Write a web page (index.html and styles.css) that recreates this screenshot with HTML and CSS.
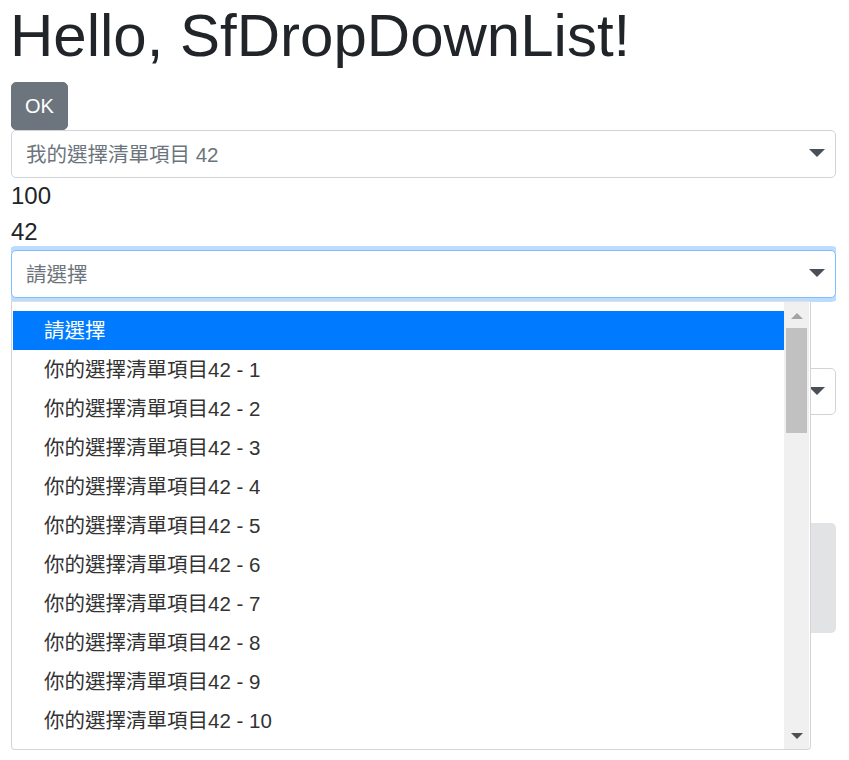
FILE: index.html
```html
<!DOCTYPE html>
<html lang="zh-Hant">
<head>
<meta charset="utf-8">
<title>SfDropDownList</title>
<link rel="stylesheet" href="styles.css">
</head>
<body>
  <h1 class="title">Hello, SfDropDownList!</h1>
  <button class="btn">OK</button>
  <div class="dd">
    <span class="dd-text">我的選擇清單項目 42</span>
    <span class="caret"></span>
  </div>
  <div class="val">100</div>
  <div class="val">42</div>
  <div class="dd-wrap">
    <div class="dd dd-focus">
      <span class="dd-text">請選擇</span>
      <span class="caret"></span>
    </div>
    <div class="popup">
      <ul class="list">
        <li class="item item-active">請選擇</li>
        <li class="item">你的選擇清單項目42 - 1</li>
        <li class="item">你的選擇清單項目42 - 2</li>
        <li class="item">你的選擇清單項目42 - 3</li>
        <li class="item">你的選擇清單項目42 - 4</li>
        <li class="item">你的選擇清單項目42 - 5</li>
        <li class="item">你的選擇清單項目42 - 6</li>
        <li class="item">你的選擇清單項目42 - 7</li>
        <li class="item">你的選擇清單項目42 - 8</li>
        <li class="item">你的選擇清單項目42 - 9</li>
        <li class="item">你的選擇清單項目42 - 10</li>
      </ul>
      <div class="scrollbar">
        <span class="sb-up"></span>
        <span class="sb-thumb"></span>
        <span class="sb-down"></span>
      </div>
    </div>
  </div>
  <div class="dd dd-third">
    <span class="dd-text"></span>
    <span class="caret"></span>
  </div>
  <div class="panel"></div>
</body>
</html>
```
FILE: styles.css
```css
* { box-sizing: border-box; }

html, body { background: #fff; }

body {
  margin: 0 13px 0 11px;
  min-height: 760px;
  font-family: "Liberation Sans", "Noto Sans CJK TC", sans-serif;
  font-size: 20px;
  color: #212529;
}

.title {
  margin: 0 0 10px -1px;
  font-size: 60px;
  font-weight: 400;
  line-height: 72px;
  color: #212529;
}

.btn {
  display: block;
  height: 48px;
  padding: 0 13px;
  border: 1px solid #6c757d;
  border-radius: 5px;
  background: #6c757d;
  color: #fff;
  font-family: inherit;
  font-size: 20px;
  line-height: 30px;
}

.dd {
  display: flex;
  align-items: center;
  justify-content: space-between;
  height: 48px;
  padding: 0 10px 0 14px;
  border: 1px solid #ced4da;
  border-radius: 5px;
  background: #fff;
}

.dd-text {
  color: #6c757d;
  font-size: 20.5px;
  line-height: 30px;
  padding-top: 2px;
}

.caret {
  width: 0;
  height: 0;
  border-left: 8px solid transparent;
  border-right: 8px solid transparent;
  border-top: 8px solid #495057;
  margin-top: -2px;
}

.val {
  font-size: 24px;
  line-height: 36px;
  color: #212529;
}

.dd-wrap {
  position: relative;
}

.dd-focus {
  border-color: #80bdff;
  box-shadow: 0 0 0 4px #bcdcfe;
}

.popup {
  position: absolute;
  top: 51px;
  left: 0;
  width: 800px;
  height: 449px;
  display: flex;
  border: 1px solid #d4d4d4;
  border-top-color: #e0e0e0;
  border-radius: 0 0 4px 4px;
  background: #fff;
  padding: 0 1px;
  z-index: 10;
}

.list {
  flex: 1;
  list-style: none;
  margin: 0;
  padding: 9px 0 0 0;
}

.item {
  height: 39px;
  display: flex;
  align-items: center;
  padding: 0 0 4px 31px;
  font-size: 20.5px;
  color: #333;
  white-space: nowrap;
}

.item-active {
  background: #007bff;
  color: #fff;
}

.scrollbar {
  position: relative;
  width: 25px;
  background: #f0f0f0;
}

.sb-up {
  position: absolute;
  top: 11px;
  left: 7px;
  width: 0;
  height: 0;
  border-left: 6px solid transparent;
  border-right: 6px solid transparent;
  border-bottom: 6px solid #a3a3a3;
}

.sb-thumb {
  position: absolute;
  top: 26px;
  left: 2px;
  width: 21px;
  height: 105px;
  background: #c1c1c1;
}

.sb-down {
  position: absolute;
  bottom: 10px;
  left: 7px;
  width: 0;
  height: 0;
  border-left: 6px solid transparent;
  border-right: 6px solid transparent;
  border-top: 6px solid #505050;
}

.dd-third {
  margin-top: 70px;
  height: 47px;
}

.panel {
  margin-top: 108px;
  height: 110px;
  border-radius: 5px;
  background: #e2e3e5;
}
```
